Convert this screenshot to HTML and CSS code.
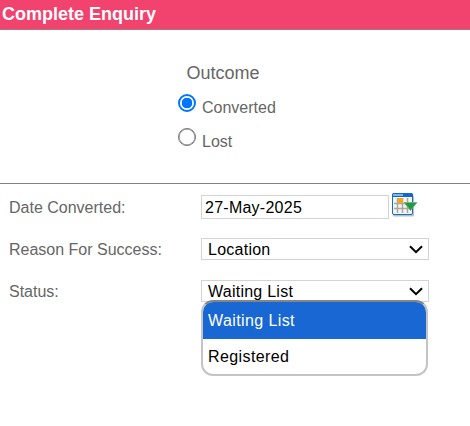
FILE: index.html
```html
<!DOCTYPE html>
<html lang="en">
<head>
    <meta charset="UTF-8">
    <meta name="viewport" content="width=device-width, initial-scale=1.0">
    <title>Complete Enquiry</title>
    <link rel="stylesheet" href="styles.css">
</head>
<body>

    <!-- Title bar -->
    <header>
        <h1>Complete Enquiry</h1>
    </header>

    <!-- Outcome -->
    <div class="outcome">
        <h2>Outcome</h2>
        <label class="choice">
            <input type="radio" name="outcome" value="converted" checked>
            <span>Converted</span>
        </label>
        <label class="choice">
            <input type="radio" name="outcome" value="lost">
            <span>Lost</span>
        </label>
    </div>

    <!-- Details -->
    <form class="details">
        <div class="row">
            <label for="dateConverted">Date Converted:</label>
            <input type="text" id="dateConverted" value="27-May-2025">
            <svg class="calendar" width="26" height="26" viewBox="0 0 26 26">
                <rect x="1" y="2" width="21" height="21.500" rx="1.5" fill="#b9bec4"/>
                <rect x="0.5" y="0.5" width="20" height="21" rx="1.5" fill="#f4f4f4" stroke="#1170cf"/>
                <path d="M0 2 Q0 0 2 0 H19 Q21 0 21 2 V4 H0 Z" fill="#1267c8"/>
                <rect x="1" y="1" width="10" height="2" fill="#7db5ee"/>
                <path d="M2 10.5 H19 M2 15.5 H19 M5.5 5 V20 M10.5 5 V20 M15.5 5 V20" stroke="#aaa6a2" stroke-width="1.5" fill="none"/>
                <rect x="6" y="5" width="5" height="5" fill="#f9a80c"/>
                <path d="M12 9.500 H25 L18.500 17.500 Z" fill="#1f9a3c" stroke="#73b783" stroke-width="0.800"/>
            </svg>
        </div>
        <div class="row">
            <label>Reason For Success:</label>
            <div class="select">
                <span>Location</span>
                <svg class="arrow" width="14" height="9" viewBox="0 0 14 9"><path d="M1 1.200 L7 7.200 L13 1.200"/></svg>
            </div>
        </div>
        <div class="row">
            <label>Status:</label>
            <div class="select">
                <span>Waiting List</span>
                <svg class="arrow" width="14" height="9" viewBox="0 0 14 9"><path d="M1 1.200 L7 7.200 L13 1.200"/></svg>
                <ul class="options">
                    <li class="selected">Waiting List</li>
                    <li>Registered</li>
                </ul>
            </div>
        </div>
    </form>

</body>
</html>
```
FILE: styles.css
```css
/* General */
* {
    box-sizing: border-box;
}

body {
    font-family: "Liberation Sans", Arial, sans-serif;
    font-size: 16px;
    margin: 0;
    min-height: 426px;
    background-color: #ffffff;
    color: #666666;
}

/* Title bar */
header {
    height: 30px;
    padding: 4px 2px;
    background-color: #f2436f;
    border-bottom: 1px solid #a8787f;
}

header h1 {
    margin: 0;
    font-size: 18px;
    line-height: 20px;
    color: #ffffff;
}

/* Outcome radios */
.outcome {
    height: 154px;
    padding: 32px 0 0 178px;
    border-bottom: 1px solid #808080;
}

.outcome h2 {
    margin: 0 0 10px 8.5px;
    font-size: 18px;
    line-height: 22px;
    font-weight: normal;
}

.choice {
    display: flex;
    height: 34px;
    gap: 6px;
}

.choice input {
    appearance: none;
    width: 18px;
    height: 18px;
    margin: 0;
    border: 1px solid #767676;
    box-shadow: inset 0 0 0 0.5px #767676;
    border-radius: 50%;
    background-color: #ffffff;
}

.choice input:checked {
    border: 2px solid #0075ff;
    box-shadow: none;
    background: radial-gradient(circle, #0075ff 5px, #ffffff 5.6px);
}

.choice span {
    line-height: 18px;
    padding-top: 5px;
}

/* Form rows */
.details {
    padding: 2px 0 0 9px;
}

.row {
    display: flex;
    align-items: center;
    height: 42px;
}

.row > label {
    width: 192px;
    padding-top: 2px;
}

.row input {
    width: 188px;
    height: 24px;
    padding: 2px 3px 0;
    border: 1px solid #d3d3d3;
    font: inherit;
    letter-spacing: 0.25px;
    color: #000000;
}

.calendar {
    margin: -3px 0 0 3px;
}

.select {
    position: relative;
    display: flex;
    align-items: center;
    justify-content: space-between;
    width: 228px;
    height: 22px;
    padding: 0 5px 0 6px;
    border: 1px solid #d3d3d3;
    letter-spacing: 0.25px;
    color: #000000;
}

.select > span {
    padding-top: 2px;
}

.arrow {
    fill: none;
    stroke: #000000;
    stroke-width: 2;
}

/* Open list under the select */
.options {
    position: absolute;
    top: 19px;
    left: -1px;
    width: 227px;
    height: 76px;
    margin: 0;
    padding: 0;
    list-style: none;
    overflow: hidden;
    background-color: #ffffff;
    border: 2px solid #c4c4c4;
    border-top-color: #858585;
    border-radius: 12px;
    letter-spacing: 0.4px;
}

.options li {
    height: 35px;
    padding-left: 5px;
    line-height: 36px;
}

.options .selected {
    height: 37px;
    line-height: 38px;
    background-color: #1967d2;
    color: #ffffff;
}
```
